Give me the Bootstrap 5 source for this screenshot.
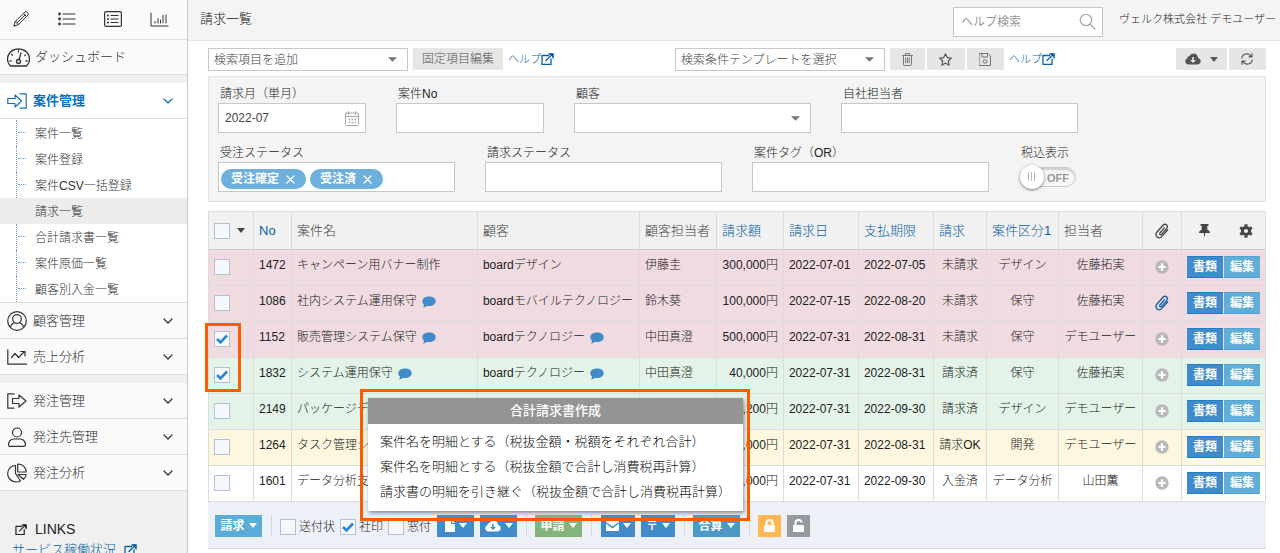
<!DOCTYPE html>
<html lang="ja">
<head>
<meta charset="utf-8">
<meta name="viewport" content="width=device-width, initial-scale=1">
<title>請求一覧</title>
<link href="https://cdn.jsdelivr.net/npm/bootstrap@5.3.0/dist/css/bootstrap.min.css" rel="stylesheet">
<style>
body{font-family:"Liberation Sans","Noto Sans CJK JP",sans-serif;font-size:12px;line-height:18px;color:#222;font-weight:300;background:#fff}
a{color:#0b5fa5;text-decoration:none}
svg{display:block;flex:none}
.ln{fill:none;stroke:currentColor;stroke-linecap:round;stroke-linejoin:round}
/* sidebar */
.side{width:188px;background:#f0f0f0;border-right:1px solid #c9c9c9}
.side-icons{height:40px;background:#fafafa;border-bottom:1px solid #ddd;padding:0 18px 1px 12px}
.side-icons a,.side-main{color:#333}
.side-main{height:36px;padding:0 14px 0 7px;gap:6px;background:#fafafa;border-bottom:1px solid #ddd;font-size:13px}
.side-main.dash{height:35px;gap:5px}
.side-main.open{background:#fff;color:#1070b8;font-weight:700}
.side-main span{flex:1}
.side-gap{height:8px}
.side-sub{background:#fff;border-bottom:1px solid #ddd;padding-top:1px}
.side-sub li{display:flex;height:26px;padding-left:16px}
.side-sub li::before{content:"";width:19px;border-left:1px dotted #6f9fca;flex:none}
.side-sub a{display:flex;align-items:center;flex:1;color:#333;position:relative;padding-top:2px}
.side-sub li a::before{content:"";width:8px;border-top:1px dotted #6f9fca;position:absolute;left:-17px;top:12px}
.side-sub li.on{background:#ececec;padding-left:35px}
.side-sub li.on::before,.side-sub li.on a::before{display:none}
.side-links{padding:28px 12px 0;font-size:13px}
.side-links h2{font-size:14px;line-height:20px;font-weight:300;color:#222;padding-left:3px;margin-bottom:2px}
.side-links a{line-height:18px}
/* header */
.top{height:41px;background:#f4f4f4;border-bottom:1px solid #e5e5e5;padding:0 4px 3px 12px}
.top h1{font-size:13px;font-weight:300}
.user{font-size:11px}
.fld{border:1px solid #c8c8c8;border-radius:0;background-color:#fff;font:inherit;color:#444;padding:0 6px;height:30px;box-shadow:none}
.search{width:150px;margin-top:6px;background:#fff;border:1px solid #c8c8c8;height:30px;color:#aaa;padding:0 6px 0 5px}
.search input{border:0;outline:0;width:100%;min-width:0;color:#555}
.search input::placeholder{color:#999}
/* toolbar */
.work{padding:7px 14px 0 20px}
.bar{gap:5px;margin-bottom:6px;height:22px}
.bar>a{height:22px;font-size:11px}
select.fld{appearance:none;background-image:url("data:image/svg+xml,%3Csvg xmlns='http://www.w3.org/2000/svg' viewBox='0 0 10 5'%3E%3Cpath fill='%23777' d='M0 0h10L5 5z'/%3E%3C/svg%3E");background-repeat:no-repeat;background-position:right 10px center;background-size:9px 5px}
.bar select.fld{height:23px;padding:0 5px}
.tbtn{height:22px;background:#e6e6e6;border:0;border-radius:0;color:#555;font:inherit;padding:0;display:flex;align-items:center;justify-content:center}
.tri{width:0;height:0;border:4px solid transparent;border-top:5px solid currentColor;border-bottom:0}
/* filters */
.panel{background:#f4f4f4;border:1px solid #e2e2e2;padding:8px 9px 9px;margin-bottom:9px}
.frow{display:grid;column-gap:30px}
.frow.a{grid-template-columns:5fr 5fr 8fr 8fr 5fr;margin-bottom:11px}
.frow.b{grid-template-columns:repeat(4,1fr)}
.frow label,.flabel{display:block;padding-left:2px}
.frow .fld{width:100%}
.tag{background:#6db0de;color:#fff;border-radius:10px;height:20px;padding:0 11px 0 10px;gap:7px;font-weight:700}
.tag button{background:none;border:0;padding:0;color:#fff}
.toggle{width:56px;height:20px;border:1px solid #ccc;border-radius:10px;background:#f6f6f6;box-shadow:inset 0 2px 2px #ccc;margin:5px 0 0 1px;font-weight:700;color:#999;font-size:11px;line-height:20px;padding-left:26px}
.toggle input{appearance:none;position:absolute;left:-1px;top:-3px;width:24px;height:24px;border-radius:50%;margin:0;background:linear-gradient(90deg,#bbb 1px,transparent 1px) 8px 7px/3px 9px no-repeat,linear-gradient(90deg,#bbb 1px,transparent 1px) 11px 7px/3px 9px no-repeat,linear-gradient(90deg,#bbb 1px,transparent 1px) 14px 7px/3px 9px no-repeat,#fff;box-shadow:0 1px 3px #777}
/* list */
.chk{width:16px;height:16px;margin:0;appearance:none;border:1px solid #b3c2d0;border-radius:0;background:#f5f9fe;display:block;flex:none}
.chk:checked{background:#f5f9fe url("data:image/svg+xml,%3Csvg xmlns='http://www.w3.org/2000/svg' viewBox='0 0 14 14'%3E%3Cpath fill='none' stroke='%232f86cc' stroke-width='2.6' d='M2 7l3.5 3.5L12 3.5'/%3E%3C/svg%3E") center/14px 14px}
.list{table-layout:fixed;width:100%;border-collapse:collapse}
.list th,.list td{border:1px solid #dcdcdc;white-space:nowrap;padding:0 5px}
.list th{height:38px;background:#f1f1f1;font-size:13px;font-weight:300;color:#444;vertical-align:middle}
.list thead th{border-bottom-color:#ccc}
.list td{height:36px;vertical-align:top;padding-top:6px}
.list td.c{text-align:center}
.list .pink td{background:#efdbe0}
.list .green td{background:#e3f3e7}
.list .yellow td{background:#fdf7df}
.list .chk{margin-top:3px}
.list th .chk{margin-top:0}
.list td svg{display:inline-block;vertical-align:middle}
.say{color:#428bca;margin-left:2px}
.clip{margin-top:2px}
.plus{color:#b9b9b9}
.rbtn,.fbtn{border:0;border-radius:0;color:#fff;font:inherit;font-weight:700;height:22px;padding:0;line-height:22px}
.rbtn{width:36px;background:#428bca;border-top:1px solid #1b7fcb;border-bottom:1px solid #1b7fcb;line-height:20px}
.rbtn.e{background:#62acd8;border-color:#4ba5d6}
.mark-box{position:absolute;border:3px solid #ff5a00;pointer-events:none}
.mark-rows{left:-4px;top:1px;width:36px;height:69px;z-index:2}
.foot{height:47px;background:#edf0f6;border-bottom:1px solid #d8d8d8;padding:1px 7px 0}
.fbtn{display:flex;align-items:center;justify-content:center;gap:4px;background:#428bca}
.fbtn.i{background:#5badd9;width:47px}
.fbtn.w{width:37px}
.fbtn.s{width:34px}
.sep{width:1px;height:22px;background:#d5d8dd}
.foot label{display:flex;align-items:center;gap:3px}
/* merged invoice menu */
.pop-box{left:152px;bottom:27px;width:390px;padding:6px 4px 7px 5px;z-index:3}
.pop{background:#fff;box-shadow:1px 2px 4px #888;padding-bottom:7px}
.pop h3{background:#949494;color:#fff;font-size:13px;line-height:26px;margin:0 0 5px;text-align:center;font-weight:500}
.pop a{display:block;color:#111;font-size:13px;line-height:25px;height:25px;padding-left:12px;white-space:nowrap;pointer-events:auto}
</style>
</head>
<body>
<svg class="d-none">
<symbol id="chev" viewBox="0 0 10 6"><path class="ln" stroke-width="1.200" d="M1 1l4 4 4-4"/></symbol>
<symbol id="ext" viewBox="0 0 13 12"><path class="ln" stroke-width="1.300" d="M7.500 2.500H1v9h9V6M5 7.500L11.500 1M8 1h4v4"/><path fill="currentColor" d="M8 .5h4.500V5z"/></symbol>
<symbol id="say" viewBox="0 0 14 12"><path fill="currentColor" d="M7 .5c3.800 0 6.700 2 6.700 4.700S10.800 10 7 10c-.7 0-1.400 0-2-.2C3.900 10.800 2.500 11.500.8 11.500c.8-.8 1.300-1.700 1.300-2.700C1 7.900.3 6.600.3 5.200.3 2.500 3.200.5 7 .5z"/></symbol>
<symbol id="plus" viewBox="0 0 14 14"><circle cx="7" cy="7" r="6.700" fill="currentColor"/><path stroke="#fff" stroke-width="2.200" d="M7 3.300v7.400M3.300 7h7.400"/></symbol>
<symbol id="clip" viewBox="0 0 14 16"><path class="ln" stroke-width="1.300" d="M9.300 4.800L5 9.800c-1 1.300.6 2.600 1.700 1.400l5-5.900c2-2.600-1.400-5.600-3.700-3L2 9c-3 3.700 1.600 8 4.900 4.400l5.800-6.700"/></symbol>
<symbol id="cloud" viewBox="0 0 16 12"><path fill="currentColor" d="M13 5c0-2.600-1.900-4.500-4.400-4.500-1.900 0-3.400 1-4 2.600C3.200 3 2.500 4 2.500 5.300 1 5.900.3 7 .3 8.300c0 1.900 1.400 3.200 3.300 3.200h8.600c2 0 3.500-1.400 3.500-3.200C15.700 6.600 14.600 5.300 13 5z"/><path d="M7.200 4h1.600v3H11L8 10 5 7h2.200z"/></symbol>
</svg>
<div class="d-flex align-items-start">
<aside class="side vh-100 overflow-hidden flex-shrink-0 sticky-top">
  <nav class="side-icons d-flex align-items-center justify-content-between">
    <a href="#" aria-label="編集"><svg width="18" height="18" viewBox="0 0 18 18"><path class="ln" d="M2 16l1.200-4.500L13 2c1.500-1 4 1.500 3 3L6.500 14.700 2 16zM3.200 11.500c1.500 0 3 1.500 3.300 3.200M11.500 3.500l3.200 3.200M4.800 13.100l8.400-8.100"/></svg></a>
    <a href="#" aria-label="一覧"><svg width="18" height="14" viewBox="0 0 18 14"><path class="ln" stroke-width="1.200" d="M5 2h12M5 7h12M5 12h12"/><path stroke="currentColor" stroke-width="2.800" stroke-linecap="round" d="M1.500 2h0M1.500 7h0M1.500 12h0"/></svg></a>
    <a href="#" aria-label="リスト"><svg width="18" height="16" viewBox="0 0 18 16"><rect class="ln" stroke-width="1.200" x=".6" y=".6" width="16.800" height="14.800" rx="1.500"/><path class="ln" stroke-width="1.200" d="M7 4.500h7M7 8h7M7 11.500h7"/><path stroke="currentColor" stroke-width="2" stroke-linecap="round" d="M4 4.500h0M4 8h0M4 11.500h0"/></svg></a>
    <a href="#" aria-label="グラフ"><svg width="19" height="15" viewBox="0 0 19 15"><path class="ln" d="M1 1v13h17M5 11V9.500M8 11V6.500M10.500 11V8M13 11V3.500M16 11V3"/></svg></a>
  </nav>
  <a href="#" class="side-main dash d-flex align-items-center"><svg width="23" height="19" viewBox="0 0 23 19"><path class="ln" stroke-width="1.300" d="M3.500 18C-3 11 2 1 11.500 1S26 11 19.500 18z"/><circle class="ln" stroke-width="1.300" cx="11.500" cy="13.500" r="2"/><path class="ln" stroke-width="1.300" d="M12 11.500L14 5M4 13H3M20 13h-1M5.500 7l-1-.8M18.500 7l-.7.600M11.500 3v1"/></svg><span>ダッシュボード</span></a>
  <div class="side-gap"></div>
  <a href="#" class="side-main open d-flex align-items-center"><svg width="20" height="16" viewBox="0 0 20 16"><path class="ln" stroke-width="1.200" d="M.8 5.500H8V2l6.500 6L8 14v-3.500H.8zM13 .8h6.200v14.400H13"/></svg><span>案件管理</span><svg width="10" height="6"><use href="#chev"/></svg></a>
  <ul class="side-sub list-unstyled mb-0">
    <li><a href="#">案件一覧</a></li><li><a href="#">案件登録</a></li><li><a href="#">案件CSV一括登録</a></li>
    <li class="on"><a href="#" aria-current="page">請求一覧</a></li>
    <li><a href="#">合計請求書一覧</a></li><li><a href="#">案件原価一覧</a></li><li><a href="#">顧客別入金一覧</a></li>
  </ul>
  <a href="#" class="side-main d-flex align-items-center"><svg width="20" height="20" viewBox="0 0 20 20"><circle class="ln" stroke-width="1.200" cx="10" cy="10" r="9.300"/><circle class="ln" stroke-width="1.200" cx="10" cy="8" r="4.300"/><path class="ln" stroke-width="1.200" d="M3.500 16.500c.3-3 2-4 4-4.700M16.500 16.500c-.3-3-2-4-4-4.700"/></svg><span>顧客管理</span><svg width="10" height="6"><use href="#chev"/></svg></a>
  <a href="#" class="side-main d-flex align-items-center"><svg width="20" height="16" viewBox="0 0 20 16"><path class="ln" stroke-width="1.200" d="M.8.800v14.400H19.500M4.500 8.500L8 4.500l3.500 4L17 3M13.500 2.500h4.500V7"/></svg><span>売上分析</span><svg width="10" height="6"><use href="#chev"/></svg></a>
  <div class="side-gap"></div>
  <a href="#" class="side-main d-flex align-items-center"><svg width="20" height="16" viewBox="0 0 20 16"><path class="ln" stroke-width="1.200" d="M7 .8H.8v14.400H7M5.500 5.500H12V2l7 6-7 6v-3.500H5.500z"/></svg><span>発注管理</span><svg width="10" height="6"><use href="#chev"/></svg></a>
  <a href="#" class="side-main d-flex align-items-center"><svg width="20" height="20" viewBox="0 0 20 20"><circle class="ln" stroke-width="1.200" cx="10" cy="5.500" r="4.500"/><path class="ln" stroke-width="1.200" d="M6.500 12h7c3 0 5 3 5 6 0 1-.5 1.400-1.500 1.400H3c-1 0-1.500-.4-1.500-1.400 0-3 2-6 5-6z"/></svg><span>発注先管理</span><svg width="10" height="6"><use href="#chev"/></svg></a>
  <a href="#" class="side-main d-flex align-items-center"><svg width="20" height="20" viewBox="0 0 20 20"><path class="ln" stroke-width="1.200" d="M8.500 2.500v8l5 7.500C7 21 .7 16.500.7 10.500c0-4.500 3.500-8 7.800-8zM10.700 1c5 0 8.500 3.500 8.500 8h-8.500zM11 11.500h8.200c-.2 2-1.200 3.500-2.700 4.800z"/></svg><span>発注分析</span><svg width="10" height="6"><use href="#chev"/></svg></a>
  <div class="side-links">
    <h2 class="d-flex align-items-center gap-2"><svg width="12" height="11"><use href="#ext"/></svg>LINKS</h2>
    <a href="#" class="d-flex align-items-center gap-2">サービス稼働状況<svg width="13" height="12"><use href="#ext"/></svg></a>
  </div>
</aside>

<div class="flex-grow-1" style="min-width:0">
<header class="top d-flex align-items-center">
  <h1 class="mb-0 me-auto">請求一覧</h1>
  <div class="search d-flex align-items-center me-3"><input type="text" placeholder="ヘルプ検索" aria-label="ヘルプ検索"><svg width="17" height="17" viewBox="0 0 17 17"><circle class="ln" stroke-width="1.300" cx="7" cy="7" r="5.700"/><path class="ln" stroke-width="1.300" d="M11 11l5 5"/></svg></div>
  <span class="user">ヴェルク株式会社 デモユーザー</span>
</header>
<main class="work">
  <div class="bar d-flex align-items-start">
    <select class="fld" style="width:200px" aria-label="検索項目"><option>検索項目を追加</option></select>
    <button class="tbtn" style="width:90px">固定項目編集</button>
    <a href="#" class="d-flex align-items-center me-auto">ヘルプ<svg width="13" height="12"><use href="#ext"/></svg></a>
    <select class="fld" style="width:210px" aria-label="検索条件テンプレート"><option>検索条件テンプレートを選択</option></select>
    <div class="d-flex" style="gap:2px">
      <button class="tbtn" style="width:35px" aria-label="削除"><svg width="11" height="13" viewBox="0 0 11 13" color="#777"><path class="ln" d="M.5 2.500h10M3.500 2.500v-2h4v2M1.500 2.500v9c0 .6.400 1 1 1h6c.6 0 1-.4 1-1v-9M3.700 4.800v5M5.500 4.800v5M7.300 4.800v5"/></svg></button>
      <button class="tbtn" style="width:38px" aria-label="お気に入り"><svg width="13" height="13" viewBox="0 0 13 13"><path class="ln" stroke-width="1.200" d="M6.500.8L8.300 4.600l4 .5-3 2.900.8 4.200-3.600-2.100-3.600 2.100.8-4.200-3-2.900 4-.5z"/></svg></button>
      <button class="tbtn" style="width:37px" aria-label="保存"><svg width="12" height="13" viewBox="0 0 12 13" color="#777"><path class="ln" d="M.5.500H9l2.500 2.500v9.500H.5zM3 .5v3.500h5.500V.5"/><circle class="ln" cx="6" cy="8.500" r="1.800"/></svg></button>
    </div>
    <a href="#" class="d-flex align-items-center me-auto">ヘルプ<svg width="13" height="12"><use href="#ext"/></svg></a>
    <div class="d-flex" style="gap:2px">
      <button class="tbtn" style="width:51px;gap:9px" aria-label="ダウンロード"><svg width="16" height="12" fill="#e6e6e6"><use href="#cloud"/></svg><span class="tri"></span></button>
      <button class="tbtn" style="width:37px" aria-label="更新"><svg width="12" height="12" viewBox="0 0 12 12"><path class="ln" stroke-width="1.200" d="M.8 5C1.300.600 7.500-.8 10.300 3.500M11.200 7c-.5 4.400-6.700 5.800-9.500 1.500M11 .8v3H8M1 11.200v-3h3"/></svg></button>
    </div>
  </div>

  <form class="panel">
    <div class="frow a">
      <div><label for="f1">請求月（単月）</label><div class="fld d-flex align-items-center"><input id="f1" class="border-0 p-0 w-100" style="min-width:0;color:#444" value="2022-07"><svg width="14" height="15" viewBox="0 0 14 15" color="#aaa"><path class="ln" d="M1.500 2h11c.6 0 1 .4 1 1v10.500c0 .6-.4 1-1 1h-11c-.6 0-1-.4-1-1V3c0-.6.400-1 1-1zM.5 5.500h13M3.500.5v3M10.500.5v3"/><path stroke="currentColor" stroke-width="1.600" stroke-dasharray="1.600 1.400" d="M3.500 8.500h8M3.500 11.500h8"/></svg></div></div>
      <div><label for="f2">案件No</label><input id="f2" class="fld"></div>
      <div><label for="f3">顧客</label><select id="f3" class="fld"><option></option></select></div>
      <div><label for="f4">自社担当者</label><input id="f4" class="fld"></div>
    </div>
    <div class="frow b">
      <div><div class="flabel">受注ステータス</div><div class="fld d-flex align-items-center" style="padding:4px 3px 0 2px;gap:4px"><span class="tag d-flex align-items-center">受注確定<button type="button" aria-label="受注確定を外す"><svg width="9" height="9" viewBox="0 0 9 9"><path class="ln" stroke-width="1.300" d="M1 1l7 7M8 1L1 8"/></svg></button></span><span class="tag d-flex align-items-center">受注済<button type="button" aria-label="受注済を外す"><svg width="9" height="9" viewBox="0 0 9 9"><path class="ln" stroke-width="1.300" d="M1 1l7 7M8 1L1 8"/></svg></button></span></div></div>
      <div><label for="f5">請求ステータス</label><input id="f5" class="fld"></div>
      <div><label for="f6">案件タグ（OR）</label><input id="f6" class="fld"></div>
      <div><label for="f7">税込表示</label><div class="toggle position-relative"><input type="checkbox" role="switch" id="f7">OFF</div></div>
    </div>
  </form>

  <table class="list">
    <colgroup><col style="width:45px"><col style="width:38px"><col><col style="width:162px"><col style="width:77px"><col style="width:67px"><col style="width:75px"><col style="width:75px"><col style="width:53px"><col style="width:72px"><col style="width:84px"><col style="width:39px"><col style="width:84px"></colgroup>
    <thead><tr>
      <th><div class="d-flex align-items-center" style="gap:7px"><input type="checkbox" class="chk" aria-label="全選択"><span class="tri"></span></div></th>
      <th><a href="#">No</a></th><th>案件名</th><th>顧客</th><th>顧客担当者</th><th><a href="#">請求額</a></th><th><a href="#">請求日</a></th><th><a href="#">支払期限</a></th><th><a href="#">請求</a></th><th><a href="#">案件区分1</a></th><th>担当者</th>
      <th><svg class="mx-auto" width="14" height="16"><use href="#clip"/></svg></th>
      <th><div class="d-flex align-items-center justify-content-between" style="padding:0 7px 0 12px"><svg width="11" height="14" viewBox="0 0 11 14"><path fill="currentColor" d="M1.500 0h8v1.800H8.300v4C10 6.500 11 7.500 11 9H6.200l-.7 5-.7-5H0c0-1.500 1-2.500 2.700-3.200v-4H1.500z"/></svg><svg width="14" height="14" viewBox="0 0 14 14"><circle cx="7" cy="7" r="3.600" fill="none" stroke="currentColor" stroke-width="3"/><path stroke="currentColor" stroke-width="3" d="M7 .3v2.200M7 11.500v2.200M1.200 3.600l1.900 1.200M10.900 9.200l1.900 1.200M1.200 10.400l1.900-1.200M10.900 4.800l1.900-1.200"/></svg></div></th>
    </tr></thead>
    <tbody>
    <tr class="pink"><td><input type="checkbox" class="chk" aria-label="1472"></td><td>1472</td><td>キャンペーン用バナー制作</td><td>boardデザイン</td><td>伊藤圭</td><td class="text-end">300,000円</td><td>2022-07-01</td><td>2022-07-05</td><td class="c">未請求</td><td class="c">デザイン</td><td class="c">佐藤拓実</td><td class="c"><svg class="plus clip" width="14" height="14"><use href="#plus"/></svg></td><td><div class="d-flex" style="gap:1px"><button class="rbtn">書類</button><button class="rbtn e">編集</button></div></td></tr>
    <tr class="pink"><td><input type="checkbox" class="chk" aria-label="1086"></td><td>1086</td><td>社内システム運用保守 <svg class="say" width="14" height="12"><use href="#say"/></svg></td><td>boardモバイルテクノロジー</td><td>鈴木葵</td><td class="text-end">100,000円</td><td>2022-07-15</td><td>2022-08-20</td><td class="c">未請求</td><td class="c">保守</td><td class="c">佐藤拓実</td><td class="c"><a href="#" aria-label="添付"><svg class="clip" width="14" height="16"><use href="#clip"/></svg></a></td><td><div class="d-flex" style="gap:1px"><button class="rbtn">書類</button><button class="rbtn e">編集</button></div></td></tr>
    <tr class="pink"><td class="position-relative"><input type="checkbox" class="chk" checked aria-label="1152"><span class="mark-box mark-rows"></span></td><td>1152</td><td>販売管理システム保守 <svg class="say" width="14" height="12"><use href="#say"/></svg></td><td>boardテクノロジー <svg class="say" width="14" height="12"><use href="#say"/></svg></td><td>中田真澄</td><td class="text-end">500,000円</td><td>2022-07-31</td><td>2022-08-31</td><td class="c">未請求</td><td class="c">保守</td><td class="c">デモユーザー</td><td class="c"><svg class="plus clip" width="14" height="14"><use href="#plus"/></svg></td><td><div class="d-flex" style="gap:1px"><button class="rbtn">書類</button><button class="rbtn e">編集</button></div></td></tr>
    <tr class="green"><td><input type="checkbox" class="chk" checked aria-label="1832"></td><td>1832</td><td>システム運用保守 <svg class="say" width="14" height="12"><use href="#say"/></svg></td><td>boardテクノロジー <svg class="say" width="14" height="12"><use href="#say"/></svg></td><td>中田真澄</td><td class="text-end">40,000円</td><td>2022-07-31</td><td>2022-08-31</td><td class="c">請求済</td><td class="c">保守</td><td class="c">佐藤拓実</td><td class="c"><svg class="plus clip" width="14" height="14"><use href="#plus"/></svg></td><td><div class="d-flex" style="gap:1px"><button class="rbtn">書類</button><button class="rbtn e">編集</button></div></td></tr>
    <tr class="green"><td><input type="checkbox" class="chk" aria-label="2149"></td><td>2149</td><td>パッケージデ</td><td></td><td></td><td class="text-end">,200円</td><td>2022-07-31</td><td>2022-09-30</td><td class="c">請求済</td><td class="c">デザイン</td><td class="c">デモユーザー</td><td class="c"><svg class="plus clip" width="14" height="14"><use href="#plus"/></svg></td><td><div class="d-flex" style="gap:1px"><button class="rbtn">書類</button><button class="rbtn e">編集</button></div></td></tr>
    <tr class="yellow"><td><input type="checkbox" class="chk" aria-label="1264"></td><td>1264</td><td>タスク管理シ</td><td></td><td></td><td class="text-end">,000円</td><td>2022-07-31</td><td>2022-08-31</td><td class="c">請求OK</td><td class="c">開発</td><td class="c">デモユーザー</td><td class="c"><svg class="plus clip" width="14" height="14"><use href="#plus"/></svg></td><td><div class="d-flex" style="gap:1px"><button class="rbtn">書類</button><button class="rbtn e">編集</button></div></td></tr>
    <tr><td><input type="checkbox" class="chk" aria-label="1601"></td><td>1601</td><td>データ分析支</td><td></td><td></td><td class="text-end">,000円</td><td>2022-07-31</td><td>2022-09-30</td><td class="c">入金済</td><td class="c">データ分析</td><td class="c">山田薫</td><td class="c"><svg class="plus clip" width="14" height="14"><use href="#plus"/></svg></td><td><div class="d-flex" style="gap:1px"><button class="rbtn">書類</button><button class="rbtn e">編集</button></div></td></tr>
    </tbody>
  </table>

  <div class="foot d-flex align-items-center position-relative">
    <button class="fbtn i">請求<span class="tri"></span></button>
    <span class="sep" style="margin:0 8px 0 9px"></span>
    <div class="d-flex" style="gap:5px;padding-top:3px">
      <label><input type="checkbox" class="chk">送付状</label>
      <label><input type="checkbox" class="chk" checked>社印</label>
      <label><input type="checkbox" class="chk">窓付</label>
    </div>
    <div class="d-flex" style="gap:6px;margin-left:6px">
      <button class="fbtn w" aria-label="書類"><svg width="10" height="12" viewBox="0 0 10 12"><path fill="#fff" d="M0 0h6v4h4v8H0zM7 0l3 3H7z"/></svg><span class="tri"></span></button>
      <button class="fbtn w" aria-label="ダウンロード"><svg width="16" height="12" fill="#428bca"><use href="#cloud"/></svg><span class="tri"></span></button>
    </div>
    <span class="sep" style="margin:0 8px 0 9px"></span>
    <button class="fbtn i" style="background:#82b47c">申請<span class="tri"></span></button>
    <span class="sep" style="margin:0 9px"></span>
    <div class="d-flex" style="gap:6px">
      <button class="fbtn s" aria-label="メール"><svg width="13" height="10" viewBox="0 0 13 10"><path fill="#fff" d="M0 1c0-.6.400-1 1-1h11c.6 0 1 .4 1 1L6.500 5.500zM0 2.500L6.500 7.500 13 2.500V9c0 .6-.4 1-1 1H1c-.6 0-1-.4-1-1z"/></svg><span class="tri"></span></button>
      <button class="fbtn s" aria-label="郵送">〒<span class="tri"></span></button>
    </div>
    <span class="sep" style="margin:0 8px 0 9px"></span>
    <button class="fbtn i" style="background:#4b98c9">合算<span class="tri"></span></button>
    <span class="sep" style="margin:0 8px 0 9px"></span>
    <div class="d-flex" style="gap:6px">
      <button class="fbtn" style="width:23px;background:#ffb751" aria-label="ロック"><svg width="11" height="13" viewBox="0 0 11 13"><path fill="none" stroke="#fff" stroke-width="2" d="M2.500 6V4c0-4 6-4 6 0v2"/><rect y="6" width="11" height="7" rx="1" fill="#fff"/></svg></button>
      <button class="fbtn" style="width:23px;background:#949a9d" aria-label="ロック解除"><svg width="11" height="13" viewBox="0 0 11 13"><path fill="none" stroke="#fff" stroke-width="2" d="M2.500 6V4c0-4 6-4 6-.5"/><rect y="6" width="11" height="7" rx="1" fill="#fff"/></svg></button>
    </div>
    <div class="mark-box pop-box">
      <div class="pop"><h3>合計請求書作成</h3>
      <a href="#">案件名を明細とする（税抜金額・税額をそれぞれ合計）</a>
      <a href="#">案件名を明細とする（税抜金額で合計し消費税再計算）</a>
      <a href="#">請求書の明細を引き継ぐ（税抜金額で合計し消費税再計算）</a></div>
    </div>
  </div>
</main>
</div>
</div>
<script src="https://cdn.jsdelivr.net/npm/bootstrap@5.3.0/dist/js/bootstrap.bundle.min.js"></script>
</body>
</html>
